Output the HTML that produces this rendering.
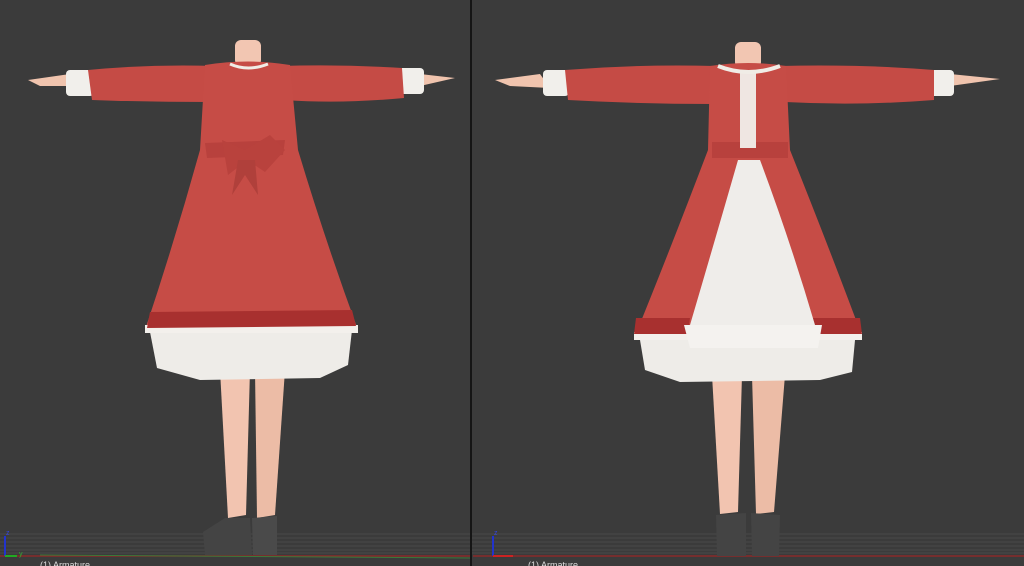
<!DOCTYPE html>
<html><head><style>
html,body{margin:0;padding:0;background:#3a3a3a;width:1024px;height:566px;overflow:hidden}
svg{display:block}
text{font-family:"Liberation Sans",sans-serif}
</style></head><body>
<svg width="1024" height="566" viewBox="0 0 1024 566" xmlns="http://www.w3.org/2000/svg">
<rect width="1024" height="566" fill="#3b3b3b"/>
<!-- floor grid -->
<g stroke="#4a4a4a" stroke-width="1">
<line x1="0" y1="534" x2="1024" y2="534"/><line x1="0" y1="538" x2="1024" y2="538"/>
<line x1="0" y1="542" x2="1024" y2="542"/><line x1="0" y1="546" x2="1024" y2="546"/>
<line x1="0" y1="550" x2="1024" y2="550"/><line x1="0" y1="553" x2="1024" y2="553"/>
</g>
<line x1="0" y1="556" x2="470" y2="556" stroke="#8a2a2a" stroke-width="1.5"/>
<line x1="40" y1="555" x2="470" y2="558" stroke="#3a7a3a" stroke-width="1"/>
<line x1="473" y1="556" x2="1024" y2="556" stroke="#8a2a2a" stroke-width="1.5"/>
<line x1="471" y1="0" x2="471" y2="566" stroke="#151515" stroke-width="2"/>
<!-- axes -->
<line x1="5" y1="536" x2="5" y2="556" stroke="#2233cc" stroke-width="2"/>
<line x1="5" y1="556" x2="17" y2="556" stroke="#22aa22" stroke-width="2"/>
<text x="6" y="535" font-size="7" fill="#3344dd">z</text><text x="19" y="556" font-size="7" fill="#33aa33">y</text>
<line x1="493" y1="536" x2="493" y2="556" stroke="#2233cc" stroke-width="2"/>
<line x1="493" y1="556" x2="513" y2="556" stroke="#cc2222" stroke-width="2"/>
<text x="494" y="535" font-size="7" fill="#3344dd">z</text>
<text x="40" y="568" font-size="9" fill="#ddd">(1) Armature</text>
<text x="528" y="568" font-size="9" fill="#ddd">(1) Armature</text>

<!-- LEFT FIGURE -->
<g>
<!-- legs -->
<path d="M220 370 L250 370 L246 515 L228 518 Z" fill="#f2c4b0"/>
<path d="M255 370 L285 370 L275 515 L257 518 Z" fill="#ecbca6"/>
<!-- shoes -->
<path d="M203 532 L225 518 L250 518 L252 555 L205 555 Z" fill="#444"/>
<path d="M252 518 L277 516 L277 555 L253 555 Z" fill="#4a4a4a"/>
<!-- petticoat -->
<path d="M150 332 L352 330 L348 365 L320 378 L200 380 L157 368 Z" fill="#eeece8"/>
<!-- neck -->
<rect x="235" y="40" width="26" height="26" rx="6" fill="#f2c6b2"/>
<!-- hands -->
<path d="M28 80 L70 74 L82 86 L40 86 Z" fill="#f0c4ae"/>
<path d="M420 74 L455 78 L420 86 Z" fill="#f0c4ae"/>
<!-- cuffs -->
<rect x="66" y="70" width="28" height="26" rx="4" fill="#f1efeb"/>
<rect x="398" y="68" width="26" height="26" rx="4" fill="#f1efeb"/>
<!-- arms -->
<path d="M88 70 Q150 64 215 66 L210 102 Q150 102 92 100 Z" fill="#c54b45"/>
<path d="M280 66 Q340 64 402 68 L404 98 Q340 104 285 100 Z" fill="#c54b45"/>
<!-- dress -->
<path d="M205 65 Q248 58 290 65 L298 150 Q325 240 358 330 L145 330 Q175 240 200 150 Z" fill="#c64c46"/>
<path d="M145 325 L358 325 L358 333 L145 333 Z" fill="#f3f0ec"/>
<path d="M150 312 L352 310 L356 326 L147 328 Z" fill="#a8302f"/>
<!-- bow -->
<path d="M205 143 L285 140 L283 155 L207 158 Z" fill="#b8413d"/>
<path d="M222 140 L245 150 L270 135 L285 150 L265 172 L247 160 L228 175 Z" fill="#b9423d"/>
<path d="M238 160 L232 195 L245 175 L258 195 L255 160 Z" fill="#b0403b"/>
<path d="M230 64 Q248 72 268 64" stroke="#f0ece6" stroke-width="3" fill="none"/>
</g>

<!-- RIGHT FIGURE -->
<g>
<path d="M712 375 L742 375 L738 512 L720 514 Z" fill="#f2c4b0"/>
<path d="M752 375 L785 375 L774 512 L756 514 Z" fill="#ecbca6"/>
<path d="M716 515 L746 513 L746 556 L717 556 Z" fill="#444"/>
<path d="M751 513 L780 515 L779 556 L752 556 Z" fill="#444"/>
<path d="M640 340 L855 340 L852 372 L820 380 L680 382 L645 370 Z" fill="#eeece8"/>
<rect x="735" y="42" width="26" height="26" rx="6" fill="#f2c6b2"/>
<path d="M495 80 L540 74 L550 88 L510 86 Z" fill="#f0c4ae"/>
<path d="M950 74 L1000 79 L950 86 Z" fill="#f0c4ae"/>
<rect x="543" y="70" width="26" height="26" rx="4" fill="#f1efeb"/>
<rect x="928" y="70" width="26" height="26" rx="4" fill="#f1efeb"/>
<path d="M565 70 Q640 64 715 66 L712 104 Q640 104 568 100 Z" fill="#c54b45"/>
<path d="M780 66 Q860 64 934 70 L934 100 Q860 106 785 102 Z" fill="#c54b45"/>
<path d="M710 66 Q748 60 786 66 L790 150 Q830 250 862 336 L635 336 Q670 250 708 150 Z" fill="#c64c46"/>
<path d="M634 332 L862 332 L862 340 L634 340 Z" fill="#f3f0ec"/>
<path d="M636 318 L690 318 L688 334 L634 334 Z" fill="#a8302f"/>
<path d="M810 318 L860 318 L862 334 L812 334 Z" fill="#a8302f"/>
<path d="M712 142 L788 142 L788 158 L712 158 Z" fill="#b8413d"/>
<!-- bodice placket -->
<rect x="740" y="72" width="16" height="76" fill="#efe6e2"/>
<!-- apron -->
<path d="M738 160 L760 160 Q790 240 815 325 Q760 335 690 325 Q715 240 738 160 Z" fill="#efedea"/>
<path d="M684 325 L822 325 L818 348 L690 348 Z" fill="#f4f2ef"/>
<path d="M718 66 Q748 78 780 66" stroke="#f0ece6" stroke-width="4" fill="none"/>
</g>
</svg>
</body></html>
